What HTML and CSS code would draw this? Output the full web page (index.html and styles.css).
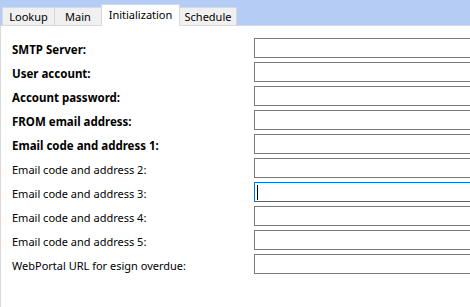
FILE: index.html
```html
<!DOCTYPE html>
<html>
<head>
<meta charset="utf-8">
<link rel="stylesheet" href="styles.css">
</head>
<body>
<div class="window">
  <div class="tabstrip">
    <div class="tab tab-lookup">Lookup</div>
    <div class="tab tab-main">Main</div>
    <div class="tab tab-init active">Initialization</div>
    <div class="tab tab-schedule">Schedule</div>
  </div>
  <div class="panel">
    <div class="form">
      <label class="label bold">SMTP Server:</label><div class="box"></div>
      <label class="label bold">User account:</label><div class="box"></div>
      <label class="label bold">Account password:</label><div class="box"></div>
      <label class="label bold">FROM email address:</label><div class="box"></div>
      <label class="label bold">Email code and address 1:</label><div class="box"></div>
      <label class="label">Email code and address 2:</label><div class="box"></div>
      <label class="label">Email code and address 3:</label><div class="box focused"><span class="caret"></span></div>
      <label class="label">Email code and address 4:</label><div class="box"></div>
      <label class="label">Email code and address 5:</label><div class="box"></div>
      <label class="label">WebPortal URL for esign overdue:</label><div class="box"></div>
    </div>
  </div>
</div>
</body>
</html>
```
FILE: styles.css
```css
html, body {
  margin: 0;
  padding: 0;
  background: #ffffff;
}
body {
  width: 470px;
  height: 307px;
  overflow: hidden;
  font-family: "Noto Sans", "Open Sans", "DejaVu Sans", sans-serif;
  font-size: 11px;
  color: #000;
}
.window {
  width: 470px;
  height: 307px;
  display: flex;
  flex-direction: column;
}
.tabstrip {
  height: 25px;
  flex: none;
  background: #b5cdf5;
  display: flex;
  align-items: flex-end;
  padding-left: 2px;
  position: relative;
  z-index: 1;
}
.tab {
  box-sizing: border-box;
  height: 18px;
  border: 1px solid #d9d9d9;
  border-bottom: none;
  background: #f0f0f0;
  display: flex;
  align-items: center;
  justify-content: center;
  line-height: 1;
  padding-bottom: 1px;
  margin-right: -1px;
}
.tab-lookup { width: 53px; }
.tab-main { width: 48px; }
.tab-init { width: 79px; }
.tab-schedule { width: 58px; }
.tab.active {
  height: 22px;
  margin-bottom: -1px;
  background: #ffffff;
  padding-bottom: 3px;
  position: relative;
  z-index: 2;
}
.panel {
  flex: 1;
  border-top: 1px solid #d9d9d9;
  border-left: 1px solid #d9d9d9;
  background: #fff;
  overflow: hidden;
}
.form {
  display: grid;
  grid-template-columns: 242px 240px;
  row-gap: 4px;
  padding: 12px 0 0 11px;
}
.label {
  height: 20px;
  display: flex;
  align-items: center;
  padding-top: 2px;
  box-sizing: border-box;
  white-space: nowrap;
}
.bold {
  font-weight: bold;
  font-size: 11.5px;
}
.box {
  box-sizing: border-box;
  height: 20px;
  border: 1px solid #7a7a7a;
  background: #fff;
  display: flex;
  align-items: center;
  padding-left: 2px;
}
.box.focused {
  border-color: #0078d7;
}
.caret {
  width: 1px;
  height: 15px;
  background: #000;
}
```
